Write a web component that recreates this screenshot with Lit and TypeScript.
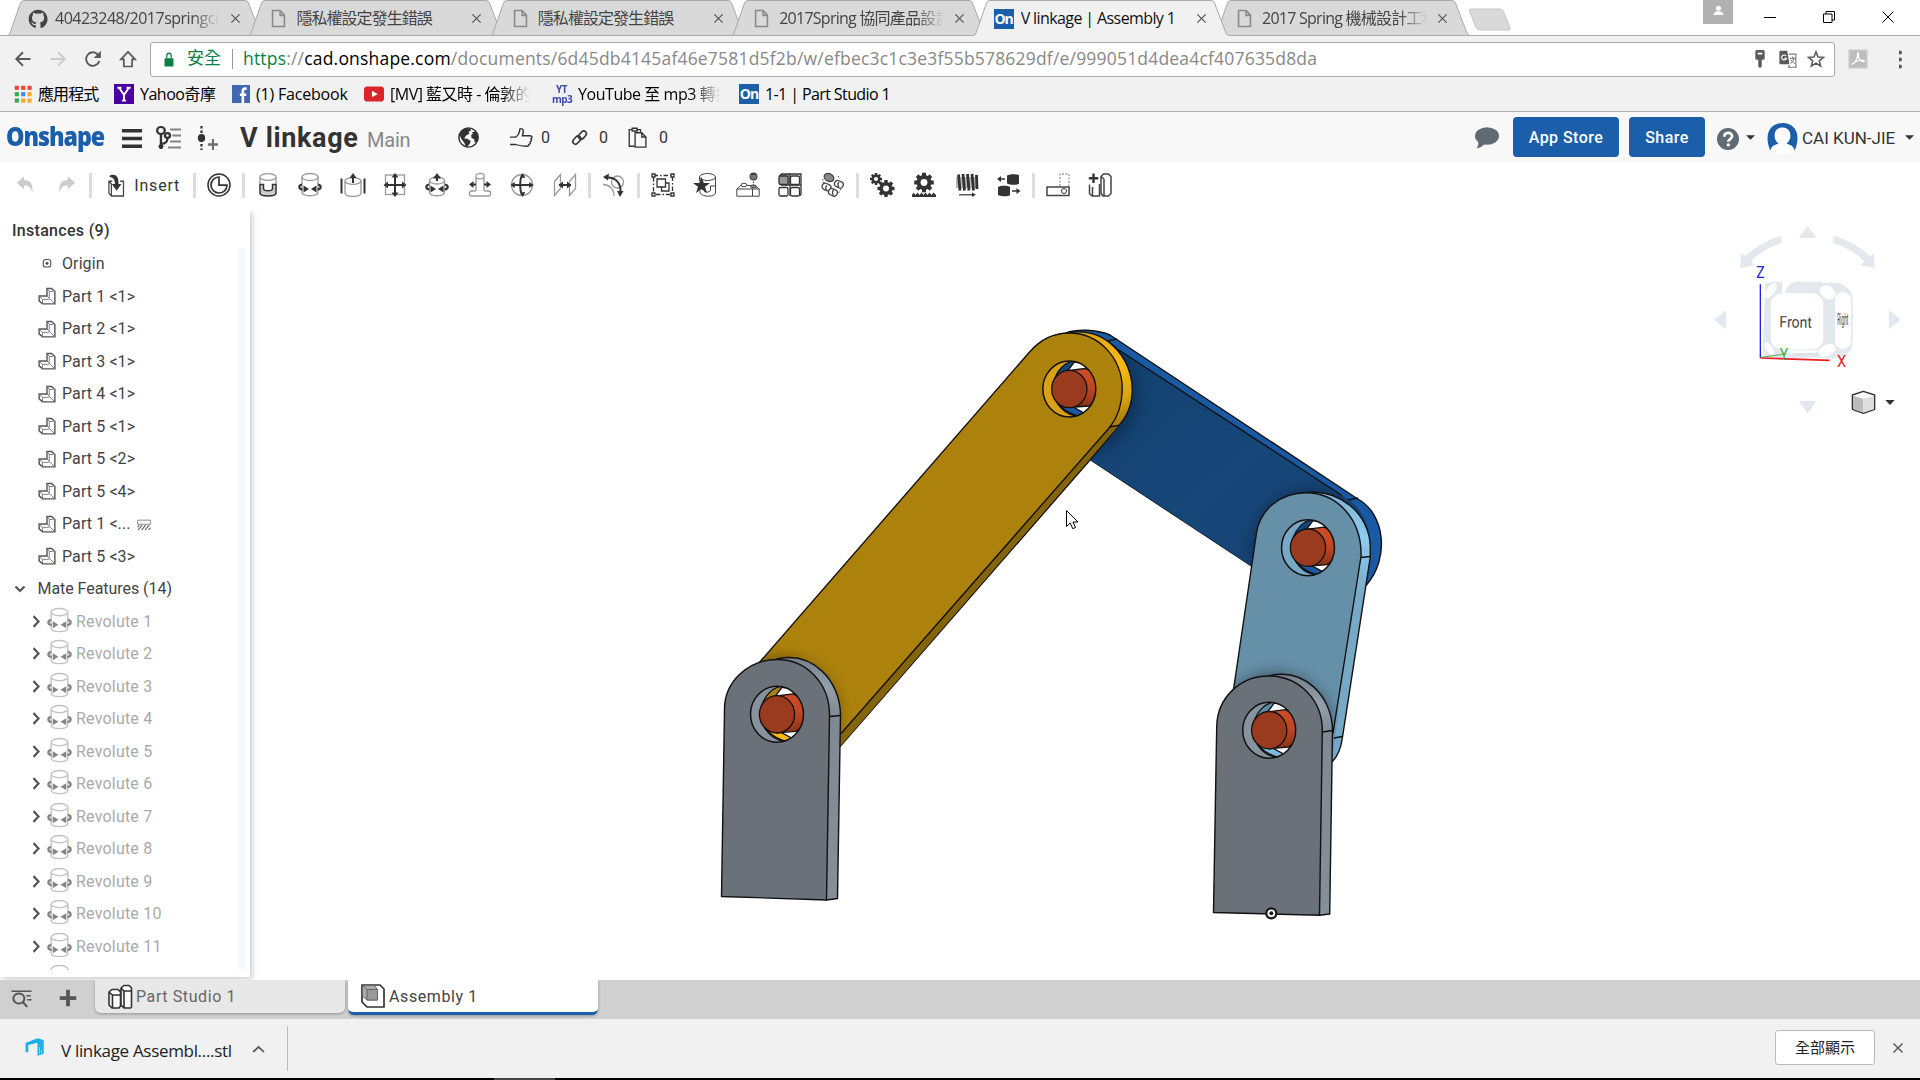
import { LitElement, html, svg, css, nothing } from "lit";
import { customElement, property } from "lit/decorators.js";
import { classMap } from "lit/directives/class-map.js";

/* ---------- shared icon glyphs, drawn on a 24 x 24 grid ---------- */

const cylinder = svg`<path d="M4 4v15c0 5 16 5 16 0V4" fill="none"/><ellipse cx="12" cy="4" rx="8" ry="3.500" fill="none"/>`;
const orbit = svg`<path class="k" d="M4 11.500C.5 12 .2 16 4.500 16.500M20 11.500c3.500.5 3.800 4.500-.5 5" fill="none" stroke-width="2.200"/><path class="kf" d="M5.500 12.600l5.500 3.400-5.500 3.400zM18.500 12.600L13 16l5.500 3.400z"/>`;
const gearTeeth = (cx: number, cy: number, r: number, n: number) =>
  Array.from({ length: n }, (_, i) => svg`<rect class="kf" x=${cx - r * 0.2} y=${cy - r} width=${r * 0.4} height=${r * 0.5} transform=${`rotate(${(360 / n) * i} ${cx} ${cy})`}/>`);
const gear = (cx: number, cy: number, r: number) =>
  svg`${gearTeeth(cx, cy, r, 8)}<circle class="k" cx=${cx} cy=${cy} r=${r * 0.56} fill="none" stroke-width=${r * 0.42}/>`;

const ICONS: Record<string, unknown> = {
  undo: svg`<path d="M3 9.500l8-7v4c7.500.5 10 4 9 14-1.500-6-4-8-9-8v4z" fill="#ccc"/>`,
  redo: svg`<path d="M22 9.500l-8-7v4C6.500 7 4 10.500 5 20.500c1.500-6 4-8 9-8v4z" fill="#ccc"/>`,
  insert: svg`<path class="t" d="M7.500 7.500H3.500V20l3 3H21V7.500h-4M6.500 23V10.500l-3-3" fill="none" stroke-width="1.500"/><path class="kf" d="M4.500 1.500c7-2 11 1 10.500 9h3.500L12.700 17.500 7 10.500h3.700C10.800 6 9 3.500 4.500 3z"/>`,
  clock: svg`<circle class="k" cx="12" cy="12" r="11" fill="none" stroke-width="1.500"/><path class="k" d="M12 4a8 8 0 1 0 8 8.200h-8z" fill="none" stroke-width="1.700"/>`,
  fastened: svg`<g class="g"><path d="M4 11V4M20 11V4" fill="none"/><ellipse cx="12" cy="4" rx="8" ry="3.300" fill="none"/></g><path class="k" d="M4 11.500h3.500v4c0 3 9 3 9 0v-4H20V20c0 4-16 4-16 0z" fill="#ccc" stroke-width="1.500"/>`,
  revolute: svg`<g class="g">${cylinder}</g>${orbit}`,
  slider: svg`<g class="g"><path d="M4 8v12c0 4.500 16 4.500 16 0V8" fill="none"/><ellipse cx="12" cy="8" rx="8" ry="3.300" fill="none"/></g><path class="k" d="M12 10V4M.500 5.500v15M23.500 5.500v15" stroke-width="2"/><path class="kf" d="M12 0l3.500 5h-7z"/>`,
  planar: svg`<rect class="g" x="2.500" y="2" width="19" height="19.500" fill="none"/><path class="k" d="M12 3v18M3 12h18" stroke-width="2"/><path class="kf" d="M12 0l3.500 4.500h-7zM12 24l3.500-4.500h-7zM.5 12L5 8.500v7zM23.500 12L19 8.500v7z"/>`,
  cylindrical: svg`<g class="g"><path d="M4.500 8v11c0 5 15 5 15 0V8" fill="none"/><ellipse cx="12" cy="7.500" rx="7.500" ry="3.500" fill="none"/></g><path class="k" d="M12 8V4" stroke-width="2.200"/><path class="kf" d="M12 0l4 5.500H8z"/>${orbit}`,
  pinslot: svg`<g class="g"><path d="M8 18V3c0-3.500 8-3.500 8 0v15M8 4c0 2.500 8 2.500 8 0M7.500 18H4c-3.500 0-3.500 5 0 5h16c3.500 0 3.500-5 0-5h-3.500" fill="none"/></g><path class="k" d="M4 11.500h4M16 11.500h4" stroke-width="2"/><path class="kf" d="M1 11.500l4.500-3.500v7zM23 11.500L18.500 8v7z"/>`,
  ball: svg`<circle class="g" cx="12" cy="12" r="10.500" fill="none"/><path class="k" d="M2 12h20M12 2c-2.500 5-2.500 15 0 20" fill="none" stroke-width="2"/><path class="kf" d="M12.800 0l2.500 5-5-.5zM12.800 24l2.500-5-5 .5zM.3 12l4.500-3v6zM23.700 12l-4.500-3v6z"/>`,
  parallel: svg`<path class="g" d="M1.500 8.500l6-7v14l-6 7zM16.500 8.500l6-7v14l-6 7z" fill="none"/><path class="k" d="M6 12h12" stroke-width="2"/><path class="kf" d="M5.500 12L10 8.500v7zM18.500 12L14 8.500v7z"/>`,
  tangent: svg`<g class="g"><circle cx="15.500" cy="9" r="6" fill="none"/><path d="M1 11.500c6 0 11 4 11 11.500" fill="none"/></g><path class="k" d="M5 4.500c9-.5 14 6 13.500 15" fill="none" stroke-width="2"/><path class="kf" d="M1 4l6-3.500-1 7zM18 24l-3-6h6.500z"/>`,
  group: svg`<rect class="k" x="2.500" y="2.500" width="19" height="19" fill="none" stroke-dasharray="4.500 2 1.500 2" stroke-width="1.300"/><path class="k" d="M1 1h3v3H1zM20 1h3v3h-3zM1 20h3v3H1zM20 20h3v3h-3z" fill="#fff" stroke-width="1.300"/><path class="k" d="M6 6h8.500v8H6z" fill="#fff" stroke-width="1.300"/><path class="k" d="M14.500 10H18v8h-7.500v-4" fill="none" stroke-width="1.300"/>`,
  matestar: svg`<g class="t"><ellipse cx="14.500" cy="4" rx="8" ry="3.500" fill="none"/><path d="M6.500 4v4M22.500 4v16c0 4-13 4.500-15.500 0v-2M11 18c2 2 6.500 1 6.500-1v-4h5" fill="none"/></g><path class="kf" d="M8.500 4l2.300 6H17l-5 3.800 2 6.200-5.500-3.800L3 20l2-6.200L0 10h6.200z"/>`,
  snap: svg`<g class="t"><path d="M.8 16l3.700-3.500h14L23.200 16v7.200H.8zM.8 16h22.400M16.500 16v7" fill="none"/><ellipse cx="8" cy="12" rx="3" ry="1.700" fill="#fff"/></g><ellipse class="t" cx="17.500" cy="13.500" rx="3" ry="1.500" fill="#888"/><circle cx="17.500" cy="3.500" r="4" fill="#444"/><path d="M14.500 3h6M15 5h5" stroke="#aaa"/><path class="t" d="M17.500 8.500v4" stroke-dasharray="1.500 1.500"/>`,
  pattern: svg`<path d="M1 3.500L3.500 1H12v10.500H1z" fill="#999"/><g class="k" stroke-width="1.300" fill="none"><rect x="1" y="3" width="9" height="8.500" rx="1.500"/><rect x="12.500" y="3" width="9" height="8.500" rx="1.500"/><rect x="1" y="14.500" width="9" height="8.500" rx="1.500"/><rect x="12.500" y="14.500" width="9" height="8.500" rx="1.500"/><path d="M1 3.500L3.500 1H23v20l-1.500 2M12 1v22M23 12H3"/></g>`,
  circular: svg`<g class="t" stroke-width="1.300"><ellipse cx="8" cy="4.500" rx="5" ry="3.800" fill="#888" transform="rotate(25 8 4.500)"/><rect x="1" y="11" width="9" height="6.500" rx="3.200" fill="#fff" transform="rotate(25 6 14)"/><path d="M6 12.500c-2 2-1.500 4 0 5" fill="none"/><rect x="8" y="16" width="9" height="6.500" rx="3.200" fill="#fff" transform="rotate(25 12 18)"/><path d="M12.500 17c-1.500 2-1 4 0 5" fill="none"/><rect x="13.500" y="8" width="9" height="6.500" rx="3.200" fill="#fff" transform="rotate(25 18 11)"/><path d="M18 9c-1.500 2-1 4 0 5" fill="none"/></g><path class="t" d="M1.500 6l2 5M17 3l2 3M20 16l-3 5" stroke-dasharray="1.500 1.500"/>`,
  gears: svg`${gear(6, 6, 6)}${gear(16, 15.500, 8.500)}`,
  rack: svg`${gear(12, 9.500, 9.800)}<path class="kf" d="M0 24v-2l1.500-2.500L3.500 22l2-2.500L7.500 22l2-2.500 2 2.500 2-2.500 2 2.500 2-2.500 2 2.500 2-2.500L24 22v2z"/>`,
  screw: svg`<path class="kf" d="M1 4h22v11H1z" opacity=".35"/><path class="k" d="M3.500 1.500l1.500 16M8 1l1.500 16.500M12.500 1L14 17.500M17 1l1.500 16.500M21.500 2l.5 14" stroke-width="2.800"/><path class="k" d="M4 21.800h15" stroke-width="1.200"/><path class="kf" d="M21 21.800l-4-2.300v4.600z"/>`,
  linear: svg`<path class="kf" d="M10 3c0-2 11-2.500 12-.5v8c-1 2-12 1.500-12-.5zM1 14.500c0-2 10-2.500 12-.5v8c-1 2-12 1.500-12-.5z"/><path class="k" d="M3 6h5M15 18h5" stroke-width="1.500"/><path class="kf" d="M0 6l4-3v6zM23.500 18l-4-3v6z"/>`,
  section: svg`<rect class="t" x="1" y="14" width="22" height="8.500" fill="#fff" stroke-width="1.500"/><path class="g" d="M14 13V1h9v12" fill="none" stroke-dasharray="2 1.500"/><circle class="k" cx="18" cy="18" r="2.500" fill="none"/>`,
  addpart: svg`<g class="t" stroke-width="1.500"><path d="M13 3.500L15.500 1h5L23 3.500v17L20.500 23H15l-2-2.500zM16 23V6M13 3.500L16 6" fill="#fff"/><path d="M1.500 11.500v9L4 23h7.500V11M4.500 23v-9" fill="#fff"/></g><path class="k" d="M5.500.5v9.500M.8 5.300h9.500" stroke-width="2.400"/>`,
  part: svg`<path d="M12 2h6l4.500 4v16.500H6l-4.500-4V12H12z" fill="#fff" stroke="#555" stroke-width="1.900"/><path d="M12 2l3 4v9l7 7M1.500 12.500l4.500 4H15M6 16.500v5M15 6h5M12 12l3 3" fill="none" stroke="#777" stroke-width="1.200"/>`,
  origin: svg`<rect x="7" y="6" width="10" height="10" rx="3.500" fill="none" stroke="#555" stroke-width="1.500"/><circle cx="12" cy="11" r="2" fill="#555"/>`,
  fixed: svg`<path d="M1 4h22v7.500H1z" fill="none" stroke="#777" stroke-width="1.500"/><path d="M2 22l7-9M8 22l7-9M14 22l7-9M20 22l3-4M1 17l3-4" stroke="#555" stroke-width="1.800"/>`,
  studio: svg`<path class="k" d="M1 7l3-2.500h6L12.500 7v14L11 23H4l-3-3zM4.500 23V10L1 7M4.500 10H12M13 3l3-2.500h5L23.500 3v19l-1 1H16l-3-3zM16 23V6l-3-3M16 6h7" fill="#fff" stroke-width="1.600"/>`,
  assembly: svg`<path class="k" d="M1 1h18l4 4v18H6l-5-5z" fill="#fff" stroke-width="1.700"/><path d="M1.500 1.500h12l3 4V16H6l-4.500-4z" fill="#aaa" stroke="#666" stroke-width="1"/><path d="M6 5.500h10.500V16H6zM1.500 1.500L6 5.500" fill="#999" stroke="#666"/>`,
  page: svg`<path d="M4.500 1.800h9.500l5.500 6v14.400h-15zM14 2v6h5.500" fill="none" stroke="#8a8a8a" stroke-width="2"/>`,
  github: svg`<path d="M12 .8a11.300 11.300 0 0 0-3.600 22c.6.100.8-.2.800-.6v-3c-3.200.8-3.900-1.300-3.900-1.300-.5-1.200-1.200-1.600-1.200-1.600-1-.7.1-.7.1-.7 1.200.1 1.800 1.200 1.800 1.200 1 1.700 2.700 1.200 3.300.9.100-.7.400-1.200.7-1.500-2.500-.3-5.200-1.300-5.200-5.600 0-1.200.5-2.200 1.200-3-.1-.3-.5-1.500.1-3.100 0 0 1-.3 3.200 1.200a11 11 0 0 1 5.600 0c2.200-1.500 3.200-1.200 3.200-1.200.6 1.600.2 2.800.1 3.100.7.800 1.200 1.800 1.200 3 0 4.300-2.700 5.300-5.200 5.600.4.300.8 1 .8 2.100v3.900c0 .4.200.7.800.6A11.300 11.300 0 0 0 12 .8z" fill="#444"/>`,
  back: svg`<path d="M22 12H3M12 3l-9 9 9 9" fill="none" stroke="#5a5a5a" stroke-width="2.500"/>`,
  forward: svg`<path d="M2 12h19M12 3l9 9-9 9" fill="none" stroke="#ccc" stroke-width="2.500"/>`,
  reload: svg`<path d="M20.500 14.500A9 9 0 1 1 18.500 6" fill="none" stroke="#5a5a5a" stroke-width="2.500"/><path d="M22.500 1v9.500h-9.500z" fill="#5a5a5a"/>`,
  home: svg`<path d="M12 2.500L2.500 12.500h4V22h11v-9.500h4z" fill="none" stroke="#5a5a5a" stroke-width="2.300"/>`,
  lock: svg`<rect x="3" y="10" width="18" height="13" rx="1.500" fill="#0b8043"/><path d="M7.500 10V6c0-5.500 9-5.500 9 0v4" fill="none" stroke="#0b8043" stroke-width="2.500"/>`,
  key: svg`<rect x="4" y="0" width="16" height="13" rx="2" fill="#5a5a5a"/><rect x="8" y="3.500" width="8" height="2.500" fill="#fff"/><path d="M9 12h6v10l-3 2-3-2z" fill="#5a5a5a"/>`,
  translate: svg`<path d="M2 1h9l3 18H2q-1.500 0-1.500-1.500v-15Q.5 1 2 1z" fill="#5a5a5a"/><path d="M13 5.500h9.500V23H13l1-3" fill="#fff" stroke="#777" stroke-width="1.500"/><path d="M9.500 8a3.300 3.300 0 1 0 .5 3H7" fill="none" stroke="#fff" stroke-width="1.600"/><path d="M14.500 11h7M18 9v2M20 11c-1 4-3 6-5 7M16 13c1 2 3 4 5 5" stroke="#666" fill="none" stroke-width="1.300"/>`,
  star: svg`<path d="M12 2.500l2.700 6.900 7.300.4-5.700 4.600 1.900 7.100L12 17.500l-6.200 4 1.900-7.100L2 9.800l7.300-.4z" fill="none" stroke="#5a5a5a" stroke-width="2"/>`,
  pdf: svg`<rect x="1" y="1" width="22" height="22" fill="#bdbdbd" stroke="#d6d6d6" stroke-width="1.500"/><path d="M5 18.500c4-2 7-7.500 6.500-12.500 0-2 2-1.500 1 1.500-.5 5 3.500 8 6.500 7.500 2-1-1.500-2-5-1.500-3 .5-5.500 1.500-9 5z" fill="none" stroke="#fff" stroke-width="1.500"/>`,
  menu3: svg`<circle cx="12" cy="3" r="2.500" fill="#5a5a5a"/><circle cx="12" cy="12" r="2.500" fill="#5a5a5a"/><circle cx="12" cy="21" r="2.500" fill="#5a5a5a"/>`,
  apps: svg`${["#f44336", "#f44336", "#f44336", "#34a853", "#4285f4", "#f9a825", "#34a853", "#f9a825", "#f9a825"].map((c, i) => svg`<rect x=${1 + (i % 3) * 8.500} y=${1 + Math.floor(i / 3) * 8.500} width="5.500" height="5.500" fill=${c}/>`)}`,
  yahoo: svg`<path d="M0 0h24v24H0z" fill="#4a00a0"/><path d="M6 4.500l6 8.500 6-8.500M12 12.500V20M4 4.500h5M15 4.500h5M9.500 20h5" fill="none" stroke="#fff" stroke-width="2.200"/>`,
  facebook: svg`<path d="M0 0h24v24H0z" fill="#4267b2"/><path d="M19.500 4.800h-2c-2.500 0-3 1-3 3V24M10.500 13h8.500" fill="none" stroke="#fff" stroke-width="3.500"/>`,
  youtube: svg`<rect x="0" y="3" width="24" height="18" rx="4" fill="#d9252a"/><path d="M9.500 8l7 4-7 4z" fill="#fff"/>`,
  hamburger: svg`<path d="M2 4h20M2 12h20M2 20h20" stroke="#333" stroke-width="3.600"/>`,
  versions: svg`<g fill="none" stroke="#333" stroke-width="2.200"><circle cx="5.500" cy="4.500" r="3.500"/><path d="M5.500 8v15M5.500 18c5.500-.5 6-3 6-6"/><circle cx="11.500" cy="9.500" r="2.300"/><circle cx="5.500" cy="20.500" r="1.200"/></g><path d="M14 3.500h10M16 9.500h8M14 15.500h10M12 21.500h12" stroke="#7a848c" stroke-width="2"/>`,
  addversion: svg`<circle cx="6" cy="12" r="4" fill="#333"/><path d="M6 0v24" stroke="#333" stroke-width="2.500" stroke-dasharray="2.500 2"/><path d="M13 18.500h11M18.500 13v11" stroke="#66717a" stroke-width="2.300"/>`,
  globe: svg`<circle cx="12" cy="12" r="11" fill="#f8f8f8" stroke="#333" stroke-width="1.700"/><path d="M2 8C5 2 9 1 13.500 1.500l1.500 2.500-3 1.500 1 2-4 2.500-2 3 3.500.5 4 2.500-1 3-2.500 3v1.500l-2-.5c-1-3-1.500-5-2.500-6C4 14 2 11 2 8zM16 6l4-1c2.500 2.500 3.500 6 3 9.500l-2 3.500-2-.5-.5-3.500-3-1.500-.5-3.500 2-1z" fill="#333"/>`,
  like: svg`<path d="M1 11.500h5.500c3-1.500 4-5 4.500-9.500 3-1 4.500 2 2.500 8h7.500c3 .5 2 2.500 1 3.500 1 1.500.5 3-.8 3.500.5 1.500-.2 2.700-1.200 3 0 1.500-1 2-2.500 2-5 0-7-.5-11-2H1" fill="none" stroke="#333" stroke-width="1.500"/>`,
  link: svg`<g fill="none" stroke="#333" stroke-width="2.200"><rect x="9.500" y="5" width="13" height="7.500" rx="3.700" transform="rotate(-48 16 8.500)"/><rect x="1.500" y="12" width="13" height="7.500" rx="3.700" transform="rotate(-48 8 15.500)"/></g>`,
  copy: svg`<path d="M8 22H1.500V3H5M10 3h5v3M5 1.500h6v3H5z" fill="none" stroke="#333" stroke-width="1.600"/><path d="M8.500 6.500h8l5 5V23h-13zM16.500 6.500v5h5" fill="none" stroke="#333" stroke-width="1.600"/>`,
  chat: svg`<ellipse cx="12" cy="10" rx="12" ry="8.700" fill="#5f6a73"/><path d="M3 15c1 3 0 5-1.500 7.500 4-1 6-2.500 8-4.500z" fill="#5f6a73"/>`,
  help: svg`<circle cx="12" cy="12" r="12" fill="#5f6a73"/><path d="M8 9.500c0-5.500 8.500-5.500 8.500-.5 0 3-4.200 3.200-4.200 6" fill="none" stroke="#fff" stroke-width="2.900"/><circle cx="12.300" cy="18.500" r="1.800" fill="#fff"/>`,
  avatar: svg`<path d="M2.500 22C-3 8 3 0 12 0s15 8 9.500 22z" fill="#1b5faa"/><path d="M12 3.500c-5 0-6.500 4-6 8 .3 2 1.500 4 3 5C6.500 17 3.500 18 2.500 22c6 3.500 13 3.500 19 0-1-4-4-5-6.500-5.500 1.500-1 2.700-3 3-5 .5-4-1-8-6-8z" fill="#fff"/>`,
  caret: svg`<path d="M0 6h24L12 18z" fill="#333"/>`,
  search: svg`<g fill="none" stroke="#555"><circle cx="9" cy="12" r="6.300" stroke-width="2.300"/><path d="M13.500 16.500l5 6" stroke-width="2.500"/><path d="M.5 2.800h23M17.500 8.500h5M18.500 13.500h5" stroke-width="2"/></g>`,
  plus: svg`<path d="M12 1v22M1 12h22" stroke="#555" stroke-width="5"/>`,
  stl: svg`<path d="M2.300 19V8L15 4.300" fill="none" stroke="#1cb0e8" stroke-width="3.200"/><path d="M1 6.500L13 1l4-.5L22.500 3v18L15 23.500V6L1 9z" fill="#1cb0e8"/><path d="M17.500 12v9M20 16v4" stroke="#8fdcf7" stroke-width="1.200"/>`,
  chevdown: svg`<path d="M3 7l9 9 9-9" fill="none" stroke="#555" stroke-width="4.500"/>`,
  chevright: svg`<path d="M7 2l10 10L7 22" fill="none" stroke="#555" stroke-width="4.300"/>`,
  chevup: svg`<path d="M2 18L12 8l10 10" fill="none" stroke="#555" stroke-width="3.500"/>`,
  cross: svg`<path d="M3 3l18 18M21 3L3 21" stroke="#555" stroke-width="2.700"/>`,
  user: svg`<circle cx="12" cy="7" r="5.500" fill="#fff"/><path d="M1 22c0-11 22-11 22 0z" fill="#fff"/>`,
  minimize: svg`<path d="M0 13h24" stroke="#000" stroke-width="2"/>`,
  restore: svg`<path d="M1 6h17v17H1zM6 6V1h17v17h-5" fill="none" stroke="#000" stroke-width="2"/>`,
  close: svg`<path d="M1 1l22 22M23 1L1 23" stroke="#000" stroke-width="2"/>`,
};

@customElement("ui-icon")
export class UiIcon extends LitElement {
  @property() name = "";
  static styles = css`
    :host { display: block; flex: none; width: 24px; height: 24px; }
    .art { display: block; width: 100%; height: 100%; overflow: visible; }
    .k { stroke: #333; }
    .kf { fill: #333; }
    .t { stroke: #444; }
    .g { stroke: #999; stroke-width: 1.300; }
  `;
  render() {
    return html`<svg class="art" viewBox="0 0 24 24" preserveAspectRatio="none">${ICONS[this.name]}</svg>`;
  }
}

/* ---------- browser chrome ---------- */

interface TabInfo { icon: string; title: string; active?: boolean; fade?: boolean; cls: string; }
const TABS: TabInfo[] = [
  { icon: "github", title: "40423248/2017springcd", fade: true, cls: "t1" },
  { icon: "page", title: "隱私權設定發生錯誤", cls: "cjk" },
  { icon: "page", title: "隱私權設定發生錯誤", cls: "cjk" },
  { icon: "page", title: "2017Spring 協同產品設計", fade: true, cls: "t4" },
  { icon: "on", title: "V linkage | Assembly 1", active: true, cls: "t5" },
  { icon: "page", title: "2017 Spring 機械設計工程", fade: true, cls: "t6" },
];

@customElement("browser-chrome")
export class BrowserChrome extends LitElement {
  static styles = css`
    :host { display: block; height: 112px; box-sizing: border-box; background: #f1f1f1; border-bottom: 1px solid #b0b0b0;
      font: 16px "Open Sans", "Noto Sans CJK TC", sans-serif; color: #000; }
    .strip { display: flex; height: 36px; background: #fff; box-shadow: inset 0 -1px #a9a9a9; padding-left: 7px; }
    .tab { position: relative; width: 257px; margin-right: -15.600px; height: 36px; flex: none; }
    .tab.active { z-index: 2; }
    .shape { position: absolute; inset: 0; }
    .face { position: relative; display: flex; align-items: center; height: 36px; padding: 1px 0 0 21px; box-sizing: border-box; }
    .face ui-icon { width: 20px; height: 20px; }
    .face .pg { width: 19px; margin: 0 1px 0 0; height: 19px; }
    .title { width: 167px; margin: -1px 0 0 7px; overflow: hidden; white-space: nowrap; color: #444; line-height: 24px; }
    .active .title { color: #111; }
    .cjk { letter-spacing: -.95px; }
    .t1 { letter-spacing: -.5px; }
    .t4, .t6 { letter-spacing: -.75px; }
    .t5 { letter-spacing: -.6px; }
    .fade { -webkit-mask-image: linear-gradient(90deg, #000 82%, transparent 99%); mask-image: linear-gradient(90deg, #000 82%, transparent 99%); }
    .face .x { width: 11px; height: 11px; margin-left: 8px; }
    .on { width: 20px; height: 20px; background: #1b5faa; color: #fff; font: 700 14px/20px "Open Sans", sans-serif; letter-spacing: -1px; text-align: center; flex: none; }
    .newtab { width: 44px; height: 23px; margin: 8px 0 0 13px; flex: none; }
    .win { display: flex; margin-left: auto; height: 36px; }
    .who { width: 30px; height: 24px; background: #b1b1b1; display: grid; place-items: center; margin-right: 31px; }
    .who ui-icon { width: 11px; height: 11px; margin-top: -3px; }
    .win .b { width: 12px; height: 12px; margin: 11px 47px 0 0; }
    .win .b:last-child { margin-right: 26px; }
    .nav { display: flex; align-items: center; height: 46px; padding: 0 0 0 14px; }
    .nav > ui-icon { width: 18px; height: 18px; margin-right: 17px; }
    .omni { display: flex; align-items: center; width: 1685px; height: 35px; box-sizing: border-box; background: #fff; border: 1px solid #a9a9a9; border-radius: 3px; margin-left: -4px; padding-left: 12px; }
    .omni .lock { width: 12px; height: 15px; }
    .safe { color: #0b8043; margin: -2px 0 0 12px; font-size: 17px; width: 45px; line-height: 24px; }
    .bar { width: 1px; height: 20px; background: #999; margin-right: 10px; }
    .url { flex: 1; font-size: 17.500px; letter-spacing: .19px; color: #888; white-space: nowrap; line-height: 26px; margin-top: -2px; }
    .url .s { color: #0b8043; }
    .url .h { color: #000; }
    .omni .i { width: 18px; height: 18px; margin-right: 9.500px; }
    .omni .key { width: 14px; margin-right: 12px; }
    .nav .pdf { width: 20px; height: 20px; margin: 0 31px 0 13px; }
    .nav .dots { width: 19px; height: 19px; margin: 0 0 0 0; }
    .marks { display: flex; align-items: center; height: 24px; padding-left: 14px; }
    .mark { display: flex; align-items: center; white-space: nowrap; line-height: 24px; overflow: hidden; }
    .mark ui-icon { width: 20px; height: 20px; margin-right: 6px; }
    .mark .sm { width: 18px; height: 18px; }
    .mark .on { margin-right: 6px; }
    .m1 { width: 100px; letter-spacing: -.9px; } .m2 { width: 118px; letter-spacing: -.5px; } .m3 { width: 132px; letter-spacing: -.2px; }
    .m4 { width: 168px; margin-right: 20px; letter-spacing: -.5px; } .m5 { width: 170px; margin-right: 17px; letter-spacing: -.45px; } .m6 { letter-spacing: -.6px; }
    .ytm { width: 19px; margin-right: 7px; font: 700 10px/10px "Open Sans", sans-serif; letter-spacing: -.6px; color: #3b4ba8; text-align: center; }
  `;
  private tab(t: TabInfo) {
    return html`<div class=${classMap({ tab: true, active: !!t.active })}>
      <svg class="shape" width="257" height="36" viewBox="0 0 257 36">
        <path d="M.5 36V35.500Q2 35.500 3 33L13.500 3Q14.500.5 17 .5H238Q240.500.5 241.500 3L253 33Q254 35.500 256.500 35.500V36z" fill=${t.active ? "#f1f1f1" : "#d9d9d9"}/>
        <path d="M.5 35.500Q2 35.500 3 33L13.500 3Q14.500.5 17 .5H238Q240.500.5 241.500 3L253 33Q254 35.500 256.500 35.500" fill="none" stroke="#a9a9a9"/>
        ${t.active ? nothing : svg`<path d="M0 35.500h257" stroke="#a9a9a9"/>`}
      </svg>
      <div class="face">
        ${t.icon === "on" ? html`<span class="on">On</span>` : html`<ui-icon class=${t.icon === "page" ? "pg" : ""} name=${t.icon}></ui-icon>`}
        <span class=${classMap({ title: true, fade: !!t.fade, [t.cls]: true })}>${t.title}</span>
        <ui-icon class="x" name="cross"></ui-icon>
      </div>
    </div>`;
  }
  render() {
    return html`
      <div class="strip">
        ${TABS.map((t) => this.tab(t))}
        <svg class="newtab" viewBox="0 0 44 23"><path d="M2.500 1h29q3 0 4 2.500l6.500 16q.8 2.500-1.500 2.500H12q-3 0-4-2.500L1.500 3Q1 1 2.500 1z" fill="#d9d9d9" stroke="#c6c6c6"/></svg>
        <div class="win">
          <div class="who"><ui-icon name="user"></ui-icon></div>
          <ui-icon class="b" name="minimize"></ui-icon><ui-icon class="b" name="restore"></ui-icon><ui-icon class="b" name="close"></ui-icon>
        </div>
      </div>
      <div class="nav">
        <ui-icon name="back"></ui-icon><ui-icon name="forward"></ui-icon><ui-icon name="reload"></ui-icon><ui-icon name="home"></ui-icon>
        <div class="omni">
          <ui-icon class="lock" name="lock"></ui-icon><span class="safe">安全</span><span class="bar"></span>
          <span class="url"><span class="s">https</span>://<span class="h">cad.onshape.com</span>/documents/6d45db4145af46e7581d5f2b/w/efbec3c1c3e3f55b578629df/e/999051d4dea4cf407635d8da</span>
          <ui-icon class="i key" name="key"></ui-icon><ui-icon class="i" name="translate"></ui-icon><ui-icon class="i" name="star"></ui-icon>
        </div>
        <ui-icon class="pdf" name="pdf"></ui-icon>
        <svg class="dots" viewBox="0 0 19 19"><g fill="#5a5a5a"><circle cx="1" cy="2.500" r="2"/><circle cx="1" cy="9.500" r="2"/><circle cx="1" cy="16.500" r="2"/></g></svg>
      </div>
      <div class="marks">
        <div class="mark m1"><ui-icon class="sm" name="apps"></ui-icon>應用程式</div>
        <div class="mark m2"><ui-icon name="yahoo"></ui-icon>Yahoo奇摩</div>
        <div class="mark m3"><ui-icon class="sm" name="facebook"></ui-icon>(1) Facebook</div>
        <div class="mark m4 fade"><ui-icon name="youtube"></ui-icon>[MV] 藍又時 - 倫敦的愛情</div>
        <div class="mark m5 fade"><span class="ytm">YT<br>mp3</span>YouTube 至 mp3 轉換器</div>
        <div class="mark m6"><span class="on">On</span>1-1 | Part Studio 1</div>
      </div>`;
  }
}

/* ---------- 3D scene ---------- */

/** A pin seen through the clearance hole of a front plate and the plate behind it. */
const pin = (id: string, cx: number, cy: number, wall: string, back: string, backWall: string) => svg`
  <clipPath id=${id}><ellipse cx=${cx} cy=${cy} rx="26.500" ry="28"/></clipPath>
  <g clip-path=${`url(#${id})`} stroke="#111" stroke-width="1.300">
    <ellipse cx=${cx} cy=${cy} rx="27" ry="28.500" fill=${wall}/>
    <ellipse cx=${cx + 10} cy=${cy - 1} rx="26" ry="28" fill=${back}/>
    <path d=${`M${cx - 16} ${cy + 4}Q${cx - 12} ${cy + 22} ${cx + 12} ${cy + 28}H${cx + 28}V${cy + 4}z`} fill=${backWall}/>
    <path d=${`M${cx - 4} ${cy - 15}L${cx + 5} ${cy - 27}L${cx + 30} ${cy - 24}V${cy + 18}L${cx + 15} ${cy + 24}L${cx + 2} ${cy + 17}z`} fill="#fff"/>
    <path d=${`M${cx} ${cy - 18.500}L${cx + 16} ${cy - 20.500}Q${cx + 28} ${cy - 16} ${cx + 28} ${cy}Q${cx + 28} ${cy + 13} ${cx + 19} ${cy + 17}L${cx} ${cy + 18.500}z`} fill="url(#pinside)"/>
    <ellipse cx=${cx} cy=${cy} rx="17.600" ry="18.700" fill="#9a3a1e"/>
  </g>
  <ellipse cx=${cx} cy=${cy} rx="26.500" ry="28" fill="none" stroke="#111" stroke-width="1.500"/>`;

@customElement("assembly-scene")
export class AssemblyScene extends LitElement {
  static styles = css`
    :host { display: block; position: relative; flex: 1; height: 770px; overflow: hidden; font-family: Roboto, sans-serif; }
    .model { display: block; width: 1670px; height: 770px; }
    .cube { position: absolute; right: 0; top: -10px; width: 240px; height: 230px; }
    .axis { font: 49px Roboto, sans-serif; }
    .face { font: 44px Roboto, sans-serif; fill: #444; }
    .e { stroke: #111; stroke-width: 1.400; stroke-linejoin: round; }
    .l { stroke: #111; stroke-width: 1.300; fill: none; }
    .nav { fill: #e2e8ee; }
  `;
  render() {
    return html`
      <svg class="model" viewBox="250 210 1670 770">
        <defs>
          <linearGradient id="yside" gradientUnits="userSpaceOnUse" x1="1090" y1="330" x2="1125" y2="430"><stop offset="0" stop-color="#e0a513"/><stop offset=".4" stop-color="#f8b915"/><stop offset=".7" stop-color="#dca313"/><stop offset="1" stop-color="#96700b"/></linearGradient>
          <linearGradient id="gside" x1="0" y1="0" x2="0" y2="1"><stop offset="0" stop-color="#75808a"/><stop offset=".12" stop-color="#939fab"/><stop offset=".25" stop-color="#7f8993"/><stop offset="1" stop-color="#858f99"/></linearGradient>
          <linearGradient id="lside" gradientUnits="userSpaceOnUse" x1="1320" y1="490" x2="1360" y2="760"><stop offset="0" stop-color="#7fb2d2"/><stop offset=".2" stop-color="#8ccbf0"/><stop offset=".4" stop-color="#78aac8"/><stop offset="1" stop-color="#76a8c6"/></linearGradient>
          <linearGradient id="bfront" x1="0" y1="0" x2="1" y2="1"><stop offset="0" stop-color="#12406f"/><stop offset=".5" stop-color="#174679"/><stop offset="1" stop-color="#133f70"/></linearGradient>
          <linearGradient id="pinside" x1="0" y1="0" x2="0" y2="1"><stop offset="0" stop-color="#cf4c25"/><stop offset=".5" stop-color="#c04623"/><stop offset="1" stop-color="#8a3117"/></linearGradient>
          <filter id="soft" x="-20%" y="-20%" width="140%" height="140%"><feGaussianBlur stdDeviation="7"/></filter>
          <clipPath id="cy"><path d="M1030 351.500L745 679L841.500 733L1110 427z"/></clipPath>
          <clipPath id="cb"><path d="M1118 349L1342 495L1342 600L1252 566L1092 461z"/></clipPath>
          <clipPath id="cl"><path d="M1256 537L1232 690V760H1332L1361 557z"/></clipPath>
        </defs>

        <path class="e" d="M1066 333C1076 329 1096 329 1110 335L1357 498.500C1385 513 1390 558 1366.500 585L1300 597L1251.500 566L1091.500 460.500L1050 400z" fill="#1a59a3"/>
        <path d="M1118 349.500L1342 495.500C1360 505 1368 520 1370 540L1310 600L1251.500 566L1091.500 460.500z" fill="url(#bfront)"/>
        <path class="l" d="M1108 341L1118 349.500L1342 495.500M1107 341L1117 339M1348 500L1358 498"/>
        <g clip-path="url(#cb)"><circle cx="1080" cy="395" r="58" filter="url(#soft)" opacity=".25"/><circle cx="1310" cy="548" r="58" filter="url(#soft)" opacity=".25"/></g>

        <path class="e" d="M1068 333C1104 326 1132 356 1132.300 390C1132 405 1127 417 1118.300 426L1090 460L840.500 746L820 745L900 600L1000 400z" fill="url(#yside)"/>
        <path d="M1110 427L1118.300 426L840.500 746L835 741z" fill="#86640a"/>
        <path class="e" d="M1030 351.500C1042 338 1056 333 1069 333C1099 333 1122 358 1122.300 389C1122 404 1118 417 1110 427L841.500 733L780 740L745 679z" fill="#ad820c"/>
        <path class="l" d="M1109 427L1118 425.500"/>
        <g clip-path="url(#cy)"><circle cx="780" cy="716" r="60" filter="url(#soft)" opacity=".33"/></g>
        ${pin("p1", 1069.300, 389, "#d9a016", "#15457a", "#1a59a3")}

        <path class="e" d="M1300 493.500C1340 486 1370 515 1370.300 547V557L1342.500 737C1341 749 1337 757 1332 762L1300 740z" fill="url(#lside)"/>
        <path class="e" d="M1256.500 533C1260 509 1281 492.800 1306 492.800C1338 493 1362 520 1361 556.500L1333 733L1232 700z" fill="#668fa8"/>
        <path class="l" d="M1361 557.500L1370 556.500M1334 738L1342.500 736.500"/>
        <g clip-path="url(#cl)"><circle cx="1275" cy="730" r="58" filter="url(#soft)" opacity=".35"/></g>
        ${pin("p2", 1308, 547.700, "#77a9c7", "#15457a", "#1a59a3")}

        <path class="e" d="M777 659C812 651 840.300 680 840.500 715L837.500 898.500L826.500 900L800 880z" fill="url(#gside)"/>
        <path class="e" d="M724.500 710C724 682 748 659.500 777 659.500C807 659.500 830 684 829.500 716L826.500 900L721.500 896.500z" fill="#6a7179"/>
        <path class="l" d="M830 716.500L840 715.500"/>
        ${pin("p3", 777, 714.300, "#87929d", "#ad820c", "#f8b915")}

        <path class="e" d="M1268 676C1304 667 1332 696 1332.500 730L1329.700 914L1319.500 915.300L1290 880z" fill="url(#gside)"/>
        <path class="e" d="M1216.700 727C1217 698 1240 676 1268.500 676C1299 676 1323 700 1322.300 732L1319.500 915.300L1213.500 912.500z" fill="#6a7179"/>
        <path class="l" d="M1323 732L1332 730.500"/>
        ${pin("p4", 1269.200, 730.200, "#87929d", "#5c8aa5", "#7fb9dc")}

        <circle cx="1271.300" cy="913.300" r="5" fill="#fff" stroke="#1a1a1a" stroke-width="2.300"/><circle cx="1271.300" cy="913.300" r="2" fill="#1a1a1a"/>
        <path d="M1066.500 510.500v16l3.700-3.500 2.600 5.700 2.700-1.200-2.500-5.500h5z" fill="#fff" stroke="#000" stroke-width="1"/>
      </svg>

      <svg class="cube" viewBox="0 0 720 690">
        <g class="nav">
          <path d="M383 78l27 36h-54zM383 640l27-37h-54zM102 359l36-28v56zM663 359l-36-28v56z"/>
          <path d="M302 108l5 20q-58 18-94 56l10 12-42 8 2-44 12 9q48-45 107-61zM463 108l-5 20q58 18 94 56l-10 12 42 8-2-44-12 9q-48-45-107-61z"/>
          <path d="M256 250q15-5 50-5v35h10q0-20 22-32h130q49 8 50 55v115q0 50-45 55H270q-22-2-22-30z"/>
        </g>
        <path d="M345 246h80M350 463h75" stroke="#cfd4d9" stroke-width="2"/>
        <g fill="#fff">
          <rect x="272" y="280" width="158" height="168" rx="34"/>
          <rect x="465" y="277" width="48" height="170" rx="22"/>
          <ellipse cx="273" cy="271" rx="12" ry="26" transform="rotate(35 273 271)"/>
          <ellipse cx="443" cy="277" rx="25" ry="19" transform="rotate(35 443 277)"/>
          <ellipse cx="268" cy="446" rx="10" ry="22" transform="rotate(-35 268 446)"/>
          <ellipse cx="441" cy="451" rx="27" ry="17" transform="rotate(-25 441 451)"/>
          <path d="M300 449l26 10h80l10-8z" opacity=".8"/>
        </g>
        <path d="M241 253V474" stroke="#2222e8" stroke-width="4"/>
        <path d="M241 474L449 481" stroke="#e82020" stroke-width="5"/>
        <path d="M241 472L318 462" stroke="#30a830" stroke-width="2.500"/>
        <text class="axis" transform="translate(229 235) scale(.86 1.060)" fill="#2222e8">Z</text>
        <text class="axis" transform="translate(299 480) scale(.86 1)" fill="#39b339">Y</text>
        <text class="axis" transform="translate(471 500) scale(.9 1.060)" fill="#e82020">X</text>
        <text class="face" transform="translate(298 382) rotate(1) scale(.96 1.080)">Front</text>
        <text class="face" transform="translate(472 375) scale(.33 1.080)">Right</text>
        <g stroke="#333" stroke-width="4" stroke-linejoin="round"><path d="M550 574l34 11v43l-34 12-33-12v-43z" fill="#fff"/></g>
        <path d="M519 587l31 9v41l-31-10z" fill="#bbb"/><path d="M550 596l32-9v40l-32 10z" fill="#ddd"/>
        <path d="M616 600h28l-14 15z" fill="#333"/>
      </svg>`;
  }
}

/* ---------- application ---------- */

const TOOL_GROUPS = [
  ["clock"],
  ["fastened", "revolute", "slider", "planar", "cylindrical", "pinslot", "ball", "parallel"],
  ["tangent"],
  ["group", "matestar", "snap", "pattern", "circular"],
  ["gears", "rack", "screw", "linear"],
  ["section", "addpart"],
];
const PARTS = ["Part 1 <1>", "Part 2 <1>", "Part 3 <1>", "Part 4 <1>", "Part 5 <1>", "Part 5 <2>", "Part 5 <4>", "Part 1 <...", "Part 5 <3>"];

@customElement("app-root")
export class AppRoot extends LitElement {
  static styles = css`
    :host { display: flex; flex-direction: column; width: 1920px; height: 1080px; overflow: hidden; background: #fff; color: #333;
      font: 16px Roboto, "Noto Sans CJK TC", sans-serif; }
    .header { display: flex; align-items: center; height: 50px; background: #f8f8f8; padding-left: 6px; box-sizing: border-box; flex: none; white-space: nowrap; }
    .logo { width: 114px; font: 800 27px/40px "Open Sans", sans-serif; color: #1b5faa; letter-spacing: -1.200px; margin-top: -3px; transform: scaleX(.86); transform-origin: 0 50%; }
    .ham { width: 24px; height: 23px; margin: 2px 11px 0 0; }
    .ver { width: 26px; margin: 2px 15px 0 0; }
    .addv { width: 22px; margin: 2px 22px 0 0; }
    .name { width: 127px; font: 700 27px/40px Roboto, sans-serif; letter-spacing: .65px; margin-top: 1px; }
    .branch { width: 91px; font-size: 20px; letter-spacing: -.2px; color: #888; margin-top: 6px; }
    .globe { width: 21px; height: 21px; margin-right: 30px; }
    .stat { display: flex; align-items: center; gap: 8px; }
    .like { width: 24px; height: 21px; } .lnk { width: 17px; height: 17px; } .cpy { width: 20px; height: 21px; }
    .s1 { width: 62px; } .s2 { width: 57px; gap: 11px; }
    .right { display: flex; align-items: center; margin-left: auto; padding-right: 6px; }
    .chat { width: 24px; height: 24px; margin: 2px 14px 0 0; }
    .btn { height: 40px; border-radius: 4px; background: #1b5faa; color: #fff; font: 500 16px/42px Roboto, sans-serif; text-align: center; letter-spacing: .45px; }
    .store { width: 106px; margin-right: 10px; } .share { width: 76px; margin-right: 12px; }
    .help { width: 22px; height: 22px; margin: 3px 7px 0 0; }
    .car { width: 9px; height: 9px; }
    .ava { width: 31px; height: 30px; margin: 2px 4px 0 12px; }
    .user { width: 103px; font-size: 17px; letter-spacing: 0; margin-top: 2px; }
    .tools { display: flex; align-items: center; height: 48px; padding: 0 0 2px 5.500px; box-sizing: border-box; flex: none; }
    .cell { width: 42.400px; display: flex; justify-content: center; }
    .cell.u { width: 41px; }
    .cell.u ui-icon { width: 22px; height: 22px; margin-left: -2px; }
    .sep { width: 3px; height: 25px; margin: 0 1.900px; background: #ddd; }
    .ins { display: flex; align-items: center; width: 82.500px; padding-left: 14px; gap: 8px; letter-spacing: .8px; }
    .ins ui-icon { width: 20px; height: 23px; margin-left: -2px; }
    .main { display: flex; height: 770px; flex: none; }
    .side { width: 250px; height: 767px; box-shadow: 2px 2px 6px rgba(0,0,0,.22); z-index: 1; background: #fff; padding-right: 4px; box-sizing: border-box; clip-path: inset(0 -12px -3px 0); }
    .head { height: 38px; padding: 1px 0 0 12px; font: 500 16px/39px Roboto, sans-serif; letter-spacing: .3px; box-sizing: border-box; }
    .list { height: 722px; overflow: hidden; border-right: 8px solid #f7f8fa; box-sizing: border-box; letter-spacing: .1px; color: #444; }
    .row { display: flex; align-items: center; height: 32.500px; padding-left: 38px; position: relative; top: -.5px; white-space: nowrap; }
    .row ui-icon { width: 18px; height: 18px; margin-right: 6px; }
    .row .fx { width: 14px; height: 13px; margin: 2px 0 0 6px; }
    .row.mate { padding-left: 14px; letter-spacing: -.05px; }
    .row.mate ui-icon { width: 12px; height: 12px; margin-right: 11.500px; }
    .row.rev { padding-left: 30px; color: #aaa; letter-spacing: .2px; }
    .row.rev .c { width: 12px; height: 13px; margin-right: 5px; }
    .row.rev .r { width: 25px; height: 25px; margin: -2px 4px 0 0; opacity: .6; }
    .tabs { display: flex; height: 39px; background: #d0d0d0; flex: none; padding-left: 11px; }
    .find { width: 21px; height: 19px; margin: 9px 27px 0 0; } .plus { width: 18px; height: 18px; margin: 9px 18px 0 0; }
    .tab { display: flex; align-items: center; width: 250px; height: 33px; box-sizing: border-box; background: #e8e8e8; border-radius: 0 0 6px 6px; box-shadow: 0 1px 3px rgba(0,0,0,.3); clip-path: inset(0 -4px -5px -4px); padding-left: 13px; color: #666; letter-spacing: .6px; margin-right: 3px; }
    .tab ui-icon { width: 24px; height: 24px; margin-right: 4px; }
    .tab.cur { height: 35px; background: #fff; border-bottom: 3px solid #1b5faa; color: #444; }
    .dl { display: flex; align-items: center; height: 59px; background: #f1f1f1; padding-left: 25px; font: 17px "Open Sans", "Noto Sans CJK TC", sans-serif; color: #222; flex: none; }
    .stl { width: 20px; height: 18px; margin: -4px 16px 0 0; }
    .file { width: 191px; letter-spacing: -.32px; white-space: nowrap; margin-top: 3px; }
    .up { width: 13px; height: 12px; margin-right: 22px; }
    .rule { width: 1px; height: 45px; background: #bbb; }
    .all { margin-left: auto; width: 100px; height: 35px; box-sizing: border-box; border: 1px solid #bbb; border-radius: 3px; background: #fff; font-size: 15px; line-height: 32px; text-align: center; margin: -2px 17px 0 auto; }
    .bye { width: 12px; height: 12px; margin: -2px 16px 0 0; }
    .task { height: 2px; background: linear-gradient(90deg, #000 494px, #444 494px, #444 555px, #000 555px); flex: none; }
  `;
  render() {
    return html`
      <browser-chrome></browser-chrome>
      <div class="header">
        <span class="logo">Onshape</span>
        <ui-icon class="ham" name="hamburger"></ui-icon><ui-icon class="ver" name="versions"></ui-icon><ui-icon class="addv" name="addversion"></ui-icon>
        <span class="name">V linkage</span><span class="branch">Main</span>
        <ui-icon class="globe" name="globe"></ui-icon>
        <span class="stat s1"><ui-icon class="like" name="like"></ui-icon>0</span>
        <span class="stat s2"><ui-icon class="lnk" name="link"></ui-icon>0</span>
        <span class="stat s2"><ui-icon class="cpy" name="copy"></ui-icon>0</span>
        <div class="right">
          <ui-icon class="chat" name="chat"></ui-icon>
          <span class="btn store">App Store</span><span class="btn share">Share</span>
          <ui-icon class="help" name="help"></ui-icon><ui-icon class="car" name="caret"></ui-icon>
          <ui-icon class="ava" name="avatar"></ui-icon><span class="user">CAI KUN-JIE</span><ui-icon class="car" name="caret"></ui-icon>
        </div>
      </div>
      <div class="tools">
        <span class="cell u"><ui-icon name="undo"></ui-icon></span><span class="cell u"><ui-icon name="redo"></ui-icon></span>
        <i class="sep"></i><span class="ins"><ui-icon name="insert"></ui-icon>Insert</span>
        ${TOOL_GROUPS.map((g) => html`<i class="sep"></i>${g.map((n) => html`<span class="cell"><ui-icon name=${n}></ui-icon></span>`)}`)}
      </div>
      <div class="main">
        <div class="side">
          <div class="head">Instances (9)</div>
          <div class="list">
            <div class="row"><ui-icon name="origin"></ui-icon>Origin</div>
            ${PARTS.map((p) => html`<div class="row"><ui-icon name="part"></ui-icon>${p}${p.endsWith("...") ? html`<ui-icon class="fx" name="fixed"></ui-icon>` : nothing}</div>`)}
            <div class="row mate"><ui-icon name="chevdown"></ui-icon>Mate Features (14)</div>
            ${Array.from({ length: 12 }, (_, i) => html`<div class="row rev"><ui-icon class="c" name="chevright"></ui-icon><ui-icon class="r" name="revolute"></ui-icon>Revolute ${i + 1}</div>`)}
          </div>
        </div>
        <assembly-scene></assembly-scene>
      </div>
      <div class="tabs">
        <ui-icon class="find" name="search"></ui-icon><ui-icon class="plus" name="plus"></ui-icon>
        <div class="tab"><ui-icon name="studio"></ui-icon>Part Studio 1</div>
        <div class="tab cur"><ui-icon name="assembly"></ui-icon>Assembly 1</div>
      </div>
      <div class="dl">
        <ui-icon class="stl" name="stl"></ui-icon><span class="file">V linkage Assembl....stl</span><ui-icon class="up" name="chevup"></ui-icon><span class="rule"></span>
        <span class="all">全部顯示</span><ui-icon class="bye" name="cross"></ui-icon>
      </div>
      <div class="task"></div>`;
  }
}
